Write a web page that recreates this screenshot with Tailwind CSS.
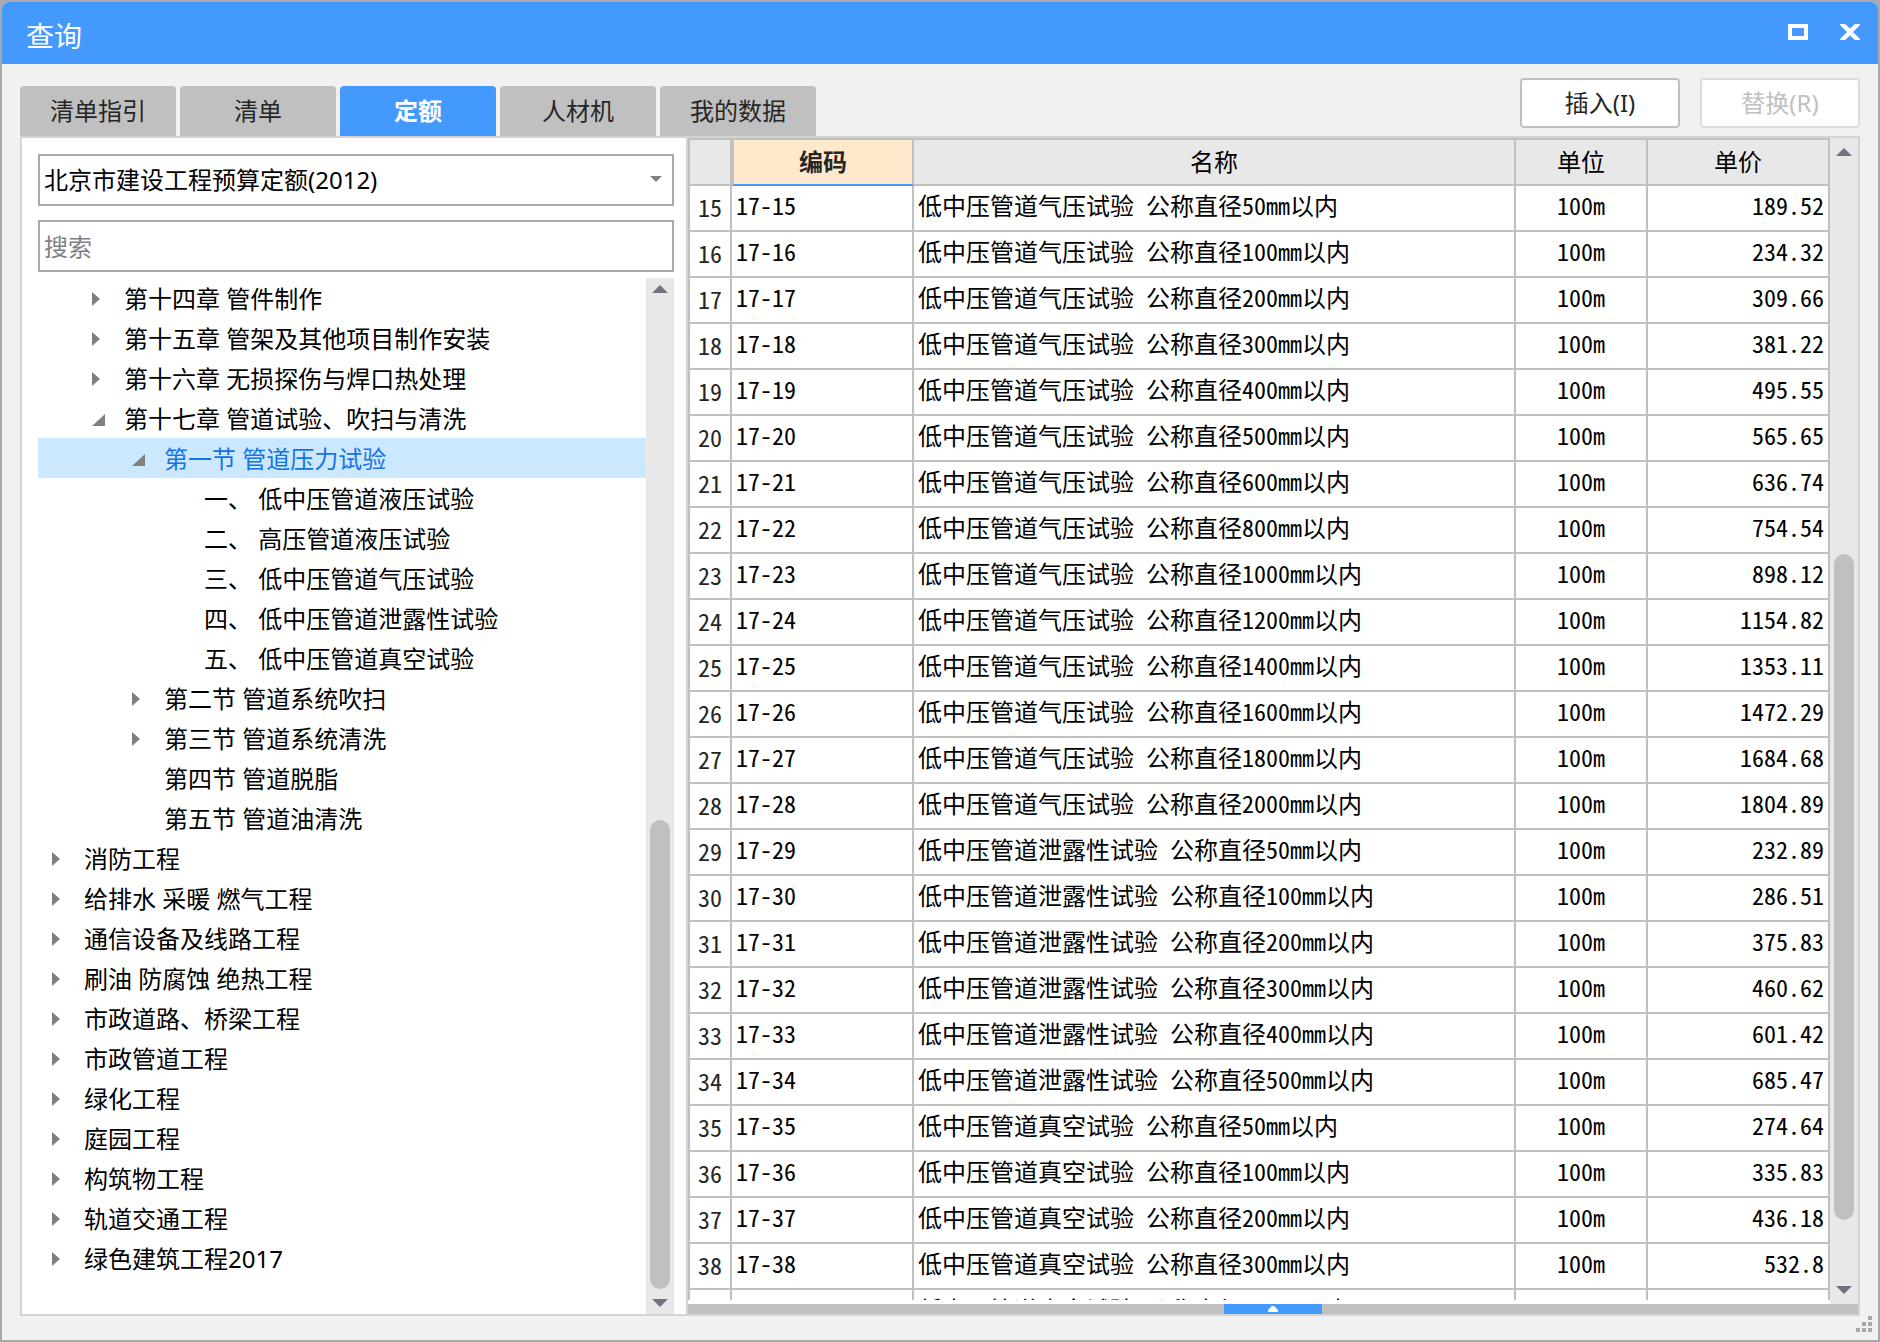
<!DOCTYPE html>
<html lang="zh-CN">
<head>
<meta charset="utf-8">
<title>查询</title>
<script src="https://cdn.jsdelivr.net/npm/@tailwindcss/browser@4"></script>
</head>
<body class="bg-[#a9a9a9]">
<div class="flex h-screen flex-col overflow-hidden rounded-t-lg border-2 border-[#a9a9a9] bg-[#f1f1f1] font-['Noto_Sans','Noto_Sans_CJK_SC',sans-serif] text-2xl text-black">
  <header class="flex h-[62px] shrink-0 items-center justify-between rounded-t-md bg-[#4499ff] pl-6 pr-[18px] text-white">
    <h1 class="pt-1.5 text-[28px] leading-9">查询</h1>
    <div class="flex items-center gap-8 pb-0.5">
      <button type="button" aria-label="最大化"><svg class="block h-4 w-5" viewBox="0 0 20 16" shape-rendering="crispEdges"><path fill="none" stroke="#fff" stroke-width="4" d="M2 2H18V14H2Z"/></svg></button>
      <button type="button" aria-label="关闭"><svg class="block h-4 w-5" viewBox="0 0 20 16"><path fill="#fff" d="M0 0H5L10 4.500L15 0H20V1L13 8L20 15V16H15L10 11.500L5 16H0V15L7 8L0 1Z"/></svg></button>
    </div>
  </header>

  <div class="flex h-[72px] shrink-0 items-end justify-between px-[18px]">
    <nav class="flex gap-1" role="tablist">
      <button type="button" role="tab" class="h-[50px] w-[156px] rounded-t bg-[#c0c0c0] text-[#262626]">清单指引</button>
      <button type="button" role="tab" class="h-[50px] w-[156px] rounded-t bg-[#c0c0c0] text-[#262626]">清单</button>
      <button type="button" role="tab" aria-selected="true" class="h-[50px] w-[156px] rounded-t bg-[#4499ff] font-bold text-white">定额</button>
      <button type="button" role="tab" class="h-[50px] w-[156px] rounded-t bg-[#c0c0c0] text-[#262626]">人材机</button>
      <button type="button" role="tab" class="h-[50px] w-[156px] rounded-t bg-[#c0c0c0] text-[#262626]">我的数据</button>
    </nav>
    <div class="flex gap-5 pb-2">
      <button type="button" class="h-[50px] w-40 rounded border-2 border-[#c0c0c0] bg-white text-[#262626]">插入(I)</button>
      <button type="button" disabled class="h-[50px] w-40 rounded border-2 border-[#dcdcdc] bg-white text-[#c0c0c0]">替换(R)</button>
    </div>
  </div>

  <main class="mx-[18px] flex min-h-0 flex-1 border-2 border-[#d4d4d4] bg-white">
    <aside class="flex w-[664px] shrink-0 flex-col pl-4 pr-3 pt-4">
      <div class="relative">
        <select aria-label="定额库" class="block h-[52px] w-full appearance-none border-2 border-[#a9a9a9] bg-white pl-1">
          <option>北京市建设工程预算定额(2012)</option>
        </select>
        <svg class="pointer-events-none absolute right-3 top-[22px] h-[6px] w-3" viewBox="0 0 12 6"><path fill="#808080" d="M0 0H12L6 6Z"/></svg>
      </div>
      <input type="text" aria-label="搜索" placeholder="搜索" class="mt-[14px] block h-[52px] w-full shrink-0 border-2 border-[#a9a9a9] pl-1 placeholder:text-[#808080]">
      <div class="mt-[6px] flex min-h-0 flex-1">
        <ul id="tree" role="tree" class="min-w-0 flex-1 overflow-hidden"></ul>
        <div class="flex w-7 flex-col items-center bg-[#e8e8e8]">
          <svg class="my-[7px] h-2 w-4 shrink-0" viewBox="0 0 16 8"><path fill="#737380" d="M0 8H16L8 0Z"/></svg>
          <div class="flex-[520]"></div>
          <div class="w-5 flex-[469] rounded-full bg-[#c0c0c0]"></div>
          <div class="flex-[3]"></div>
          <svg class="my-[7px] h-2 w-4 shrink-0" viewBox="0 0 16 8"><path fill="#737380" d="M0 0H16L8 8Z"/></svg>
        </div>
      </div>
    </aside>

    <section class="flex min-w-0 flex-1 flex-col border-l-2 border-[#d4d4d4]">
      <div class="flex min-h-0 flex-1">
        <div class="min-w-0 flex-1 pb-1">
          <div class="h-full overflow-hidden border-l-2 border-t-2 border-[#c0c0c0]">
            <table class="w-full table-fixed border-separate border-spacing-0 font-['Noto_Sans_Mono_CJK_SC','Liberation_Mono','Noto_Sans_CJK_SC',monospace] leading-8">
              <colgroup><col class="w-[42px]"><col class="w-[182px]"><col><col class="w-[132px]"><col class="w-[182px]"></colgroup>
              <thead>
                <tr class="h-[46px] bg-[#e8e8e8]">
                  <th class="border-b-2 border-r-2 border-[#c0c0c0] p-0"></th>
                  <th class="border-b-2 border-l-2 border-r-2 border-b-[#4499ff] border-l-[#c0c0c0] border-r-[#c0c0c0] bg-[#ffe8cc] p-0 pb-0.5 font-bold text-[#262626]">编码</th>
                  <th class="border-b-2 border-r-2 border-[#c0c0c0] p-0 pb-0.5 font-normal">名称</th>
                  <th class="border-b-2 border-r-2 border-[#c0c0c0] p-0 pb-0.5 font-normal">单位</th>
                  <th class="border-b-2 border-r-2 border-[#c0c0c0] p-0 pb-0.5 font-normal">单价</th>
                </tr>
              </thead>
              <tbody id="rows"></tbody>
            </table>
          </div>
        </div>
        <div class="flex w-7 flex-col items-center bg-[#e8e8e8]">
          <svg class="mb-1 mt-[10px] h-2 w-4 shrink-0" viewBox="0 0 16 8"><path fill="#737380" d="M0 8H16L8 0Z"/></svg>
          <div class="flex-[394]"></div>
          <div class="w-5 flex-[666] rounded-full bg-[#c0c0c0]"></div>
          <div class="flex-[62]"></div>
          <svg class="mb-[10px] mt-1 h-2 w-4 shrink-0" viewBox="0 0 16 8"><path fill="#737380" d="M0 0H16L8 8Z"/></svg>
        </div>
      </div>
      <div class="flex h-[10px] shrink-0 justify-center bg-[#c0c0c0]">
        <button type="button" aria-label="展开" class="flex w-[98px] items-center justify-center bg-[#4499ff]"><svg class="h-[6px] w-[10px]" viewBox="0 0 10 6"><path fill="#fff" d="M0 6V4L4 0H6L10 4V6Z"/></svg></button>
      </div>
    </section>
  </main>

  <footer class="flex h-6 shrink-0 justify-end pr-[6px]">
    <svg class="h-4 w-4" viewBox="0 0 16 16" shape-rendering="crispEdges"><path fill="#a9a9a9" d="M12 0h4v4h-4zM6 6h4v4H6zM12 6h4v4h-4zM0 12h4v4H0zM6 12h4v4H6zM12 12h4v4h-4z"/></svg>
  </footer>
</div>

<script>
// [level, state, label]; state: ">" collapsed, "v" expanded, "" leaf
const nodes = [
  [1, ">", "第十四章 管件制作"],
  [1, ">", "第十五章 管架及其他项目制作安装"],
  [1, ">", "第十六章 无损探伤与焊口热处理"],
  [1, "v", "第十七章 管道试验、吹扫与清洗"],
  [2, "v", "第一节 管道压力试验"],
  [3, "", "一、 低中压管道液压试验"],
  [3, "", "二、 高压管道液压试验"],
  [3, "", "三、 低中压管道气压试验"],
  [3, "", "四、 低中压管道泄露性试验"],
  [3, "", "五、 低中压管道真空试验"],
  [2, ">", "第二节 管道系统吹扫"],
  [2, ">", "第三节 管道系统清洗"],
  [2, "", "第四节 管道脱脂"],
  [2, "", "第五节 管道油清洗"],
  [0, ">", "消防工程"],
  [0, ">", "给排水 采暖 燃气工程"],
  [0, ">", "通信设备及线路工程"],
  [0, ">", "刷油 防腐蚀 绝热工程"],
  [0, ">", "市政道路、桥梁工程"],
  [0, ">", "市政管道工程"],
  [0, ">", "绿化工程"],
  [0, ">", "庭园工程"],
  [0, ">", "构筑物工程"],
  [0, ">", "轨道交通工程"],
  [0, ">", "绿色建筑工程2017"]
];
const shapes = { ">": "M0 1L8 8L0 15Z", "v": "M13 3V15H0Z", "": "" };
document.getElementById("tree").innerHTML = nodes.map(([level, state, label], i) =>
  `<li role="treeitem" class="flex h-10 items-center whitespace-pre pt-0.5 ${i === 4 ? "bg-[#cce8ff] text-[#1473e6]" : ""}" style="padding-left:${14 + level * 40}px"><svg class="mr-4 h-4 w-4 shrink-0" viewBox="0 0 16 16"><path fill="#808080" d="${shapes[state]}"/></svg>${label}</li>`
).join("");

const groups = [
  ["气压试验", [[50, "189.52"], [100, "234.32"], [200, "309.66"], [300, "381.22"], [400, "495.55"], [500, "565.65"], [600, "636.74"], [800, "754.54"], [1000, "898.12"], [1200, "1154.82"], [1400, "1353.11"], [1600, "1472.29"], [1800, "1684.68"], [2000, "1804.89"]]],
  ["泄露性试验", [[50, "232.89"], [100, "286.51"], [200, "375.83"], [300, "460.62"], [400, "601.42"], [500, "685.47"]]],
  ["真空试验", [[50, "274.64"], [100, "335.83"], [200, "436.18"], [300, "532.8"], [400, ""]]]
];
let n = 14;
document.getElementById("rows").innerHTML = groups.flatMap(([kind, items]) => items.map(([size, price]) => {
  n++;
  const loaded = price !== "";
  return `<tr class="h-[46px] whitespace-nowrap">
    <td class="border-b-2 border-r-2 border-[#c0c0c0] p-0 pb-0.5 text-center text-[#262626]">${loaded ? n : ""}</td>
    <td class="border-b-2 border-r-2 border-[#c0c0c0] p-0 pb-1.5 pl-1">${loaded ? "17-" + n : ""}</td>
    <td class="border-b-2 border-r-2 border-[#c0c0c0] p-0 pb-1.5 pl-1">低中压管道${kind} 公称直径${size}mm以内</td>
    <td class="border-b-2 border-r-2 border-[#c0c0c0] p-0 pb-1.5 text-center">${loaded ? "100m" : ""}</td>
    <td class="border-b-2 border-r-2 border-[#c0c0c0] p-0 pb-1.5 pr-1 text-right">${price}</td>
  </tr>`;
})).join("");
</script>
</body>
</html>
